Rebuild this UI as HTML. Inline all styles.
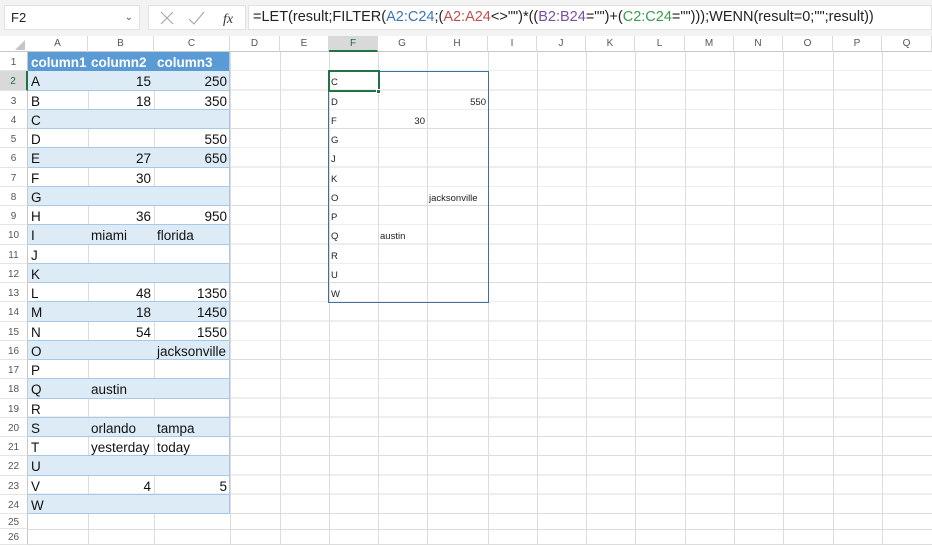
<!DOCTYPE html>
<html><head><meta charset="utf-8"><style>
*{margin:0;padding:0;box-sizing:border-box}
body{width:932px;height:545px;overflow:hidden;background:#fff;font-family:"Liberation Sans",Arial,sans-serif;position:relative}
.abs{position:absolute}
#top{left:0;top:0;width:932px;height:36px;background:#f3f3f3}
#nb{left:4px;top:5px;width:136px;height:25px;background:#fff;border:1px solid #e1e1e1;font-size:13px;line-height:23px;padding-left:6px;color:#222}
#fxbox{left:148px;top:5px;width:98px;height:25px;background:#fff;border:1px solid #e1e1e1}
#fb{left:248px;top:5px;width:684px;height:25px;background:#fff;border:1px solid #e1e1e1;font-size:14.5px;line-height:23px;padding-left:4px;color:#222;white-space:nowrap}
#hdr{left:0;top:36px;width:932px;height:16px;background:#fff;border-bottom:1px solid #c8c8c8}
.ch{position:absolute;top:36px;height:16px;font-size:10px;color:#555;text-align:center;line-height:16px;border-right:1px solid #dadada}
.rh{position:absolute;left:0;width:28px;font-size:10px;color:#555;text-align:center;border-right:1px solid #c8c8c8;border-bottom:1px solid #e4e4e4}
.vl{position:absolute;top:52px;width:1px;height:493px;background:#dcdcdc}
.hl{position:absolute;left:28px;width:904px;height:1px;background:#dcdcdc}
.band{position:absolute;left:28px;width:202px;height:19.25px;background:#ddebf7;border-bottom:1px solid #a9c8e8}
.wb{position:absolute;left:28px;width:202px;height:19.25px;border-bottom:1px solid #a9c8e8}
.t{position:absolute;height:19.25px;font-size:13.5px;line-height:21px;padding:0 3px;color:#111;white-space:nowrap}
.r{text-align:right}
.s{position:absolute;height:19.25px;font-size:9.5px;line-height:24px;padding:0 2px;color:#222;white-space:nowrap}
</style></head><body>
<div id="top" class="abs"></div>
<div id="nb" class="abs">F2<span style="position:absolute;right:6px;top:0;font-size:10px;color:#555">⌄</span></div>
<div id="fxbox" class="abs">
<svg width="98" height="25" style="position:absolute;left:0;top:0"><path d="M12 6l12 12M24 6l-12 12" stroke="#aaa" stroke-width="1.2"/><path d="M40 13l5 5 10-12" stroke="#aaa" stroke-width="1.2" fill="none"/><text x="74" y="17" font-family="Liberation Serif" font-style="italic" font-size="14" fill="#333">fx</text></svg></div>
<div id="fb" class="abs">=LET(result;FILTER(<span style="color:#3b73b9">A2:C24</span>;(<span style="color:#c0504d">A2:A24</span>&lt;&gt;"")*((<span style="color:#7a4fa0">B2:B24</span>="")+(<span style="color:#3c9a4c">C2:C24</span>="")));WENN(result=0;"";result))</div>
<div id="hdr" class="abs"></div>
<svg class="abs" style="left:14px;top:39px" width="12" height="12"><path d="M11 1V11H1z" fill="#c6c6c6"/></svg>
<div class="ch" style="left:28px;width:60px">A</div>
<div class="ch" style="left:88px;width:66px">B</div>
<div class="ch" style="left:154px;width:76px">C</div>
<div class="ch" style="left:230px;width:50px">D</div>
<div class="ch" style="left:280px;width:49px">E</div>
<div class="ch" style="left:329px;width:49px;background:#d9d9d9;color:#1e6b3e;border-bottom:2px solid #217346">F</div>
<div class="ch" style="left:378px;width:49px">G</div>
<div class="ch" style="left:427px;width:61px">H</div>
<div class="ch" style="left:488px;width:49px">I</div>
<div class="ch" style="left:537px;width:49px">J</div>
<div class="ch" style="left:586px;width:49px">K</div>
<div class="ch" style="left:635px;width:50px">L</div>
<div class="ch" style="left:685px;width:49px">M</div>
<div class="ch" style="left:734px;width:49px">N</div>
<div class="ch" style="left:783px;width:50px">O</div>
<div class="ch" style="left:833px;width:49px">P</div>
<div class="ch" style="left:882px;width:50px">Q</div>
<div style="position:absolute;left:28px;top:52px;width:904px;height:462px;background:repeating-linear-gradient(to bottom,transparent 0,transparent 18.25px,#dcdcdc 18.25px,#dcdcdc 19.25px)"></div>
<div class="hl" style="top:529px"></div><div class="hl" style="top:544px"></div>
<div class="vl" style="left:88px"></div><div class="vl" style="left:154px"></div><div class="vl" style="left:230px"></div><div class="vl" style="left:280px"></div><div class="vl" style="left:329px"></div><div class="vl" style="left:378px"></div><div class="vl" style="left:427px"></div><div class="vl" style="left:488px"></div><div class="vl" style="left:537px"></div><div class="vl" style="left:586px"></div><div class="vl" style="left:635px"></div><div class="vl" style="left:685px"></div><div class="vl" style="left:734px"></div><div class="vl" style="left:783px"></div><div class="vl" style="left:833px"></div><div class="vl" style="left:882px"></div>
<div class="band" style="top:52px;background:#5b9bd5;border-bottom:1px solid #5b9bd5"></div>
<div class="band" style="top:71.25px"></div><div class="wb" style="top:90.5px"></div>
<div class="band" style="top:109.75px"></div><div class="wb" style="top:129px"></div>
<div class="band" style="top:148.25px"></div><div class="wb" style="top:167.5px"></div>
<div class="band" style="top:186.75px"></div><div class="wb" style="top:206px"></div>
<div class="band" style="top:225.25px"></div><div class="wb" style="top:244.5px"></div>
<div class="band" style="top:263.75px"></div><div class="wb" style="top:283px"></div>
<div class="band" style="top:302.25px"></div><div class="wb" style="top:321.5px"></div>
<div class="band" style="top:340.75px"></div><div class="wb" style="top:360px"></div>
<div class="band" style="top:379.25px"></div><div class="wb" style="top:398.5px"></div>
<div class="band" style="top:417.75px"></div><div class="wb" style="top:437px"></div>
<div class="band" style="top:456.25px"></div><div class="wb" style="top:475.5px"></div>
<div class="band" style="top:494.75px"></div>
<div style="position:absolute;left:229px;top:52px;width:1px;height:462px;background:#a9c8e8"></div>
<div class="rh" style="top:52px;height:19.25px;line-height:21px">1</div>
<div class="rh" style="top:71.25px;height:19.25px;line-height:21px;background:#d9d9d9;color:#1e6b3e;border-right:2px solid #217346">2</div>
<div class="rh" style="top:90.5px;height:19.25px;line-height:21px">3</div>
<div class="rh" style="top:109.75px;height:19.25px;line-height:21px">4</div>
<div class="rh" style="top:129px;height:19.25px;line-height:21px">5</div>
<div class="rh" style="top:148.25px;height:19.25px;line-height:21px">6</div>
<div class="rh" style="top:167.5px;height:19.25px;line-height:21px">7</div>
<div class="rh" style="top:186.75px;height:19.25px;line-height:21px">8</div>
<div class="rh" style="top:206px;height:19.25px;line-height:21px">9</div>
<div class="rh" style="top:225.25px;height:19.25px;line-height:21px">10</div>
<div class="rh" style="top:244.5px;height:19.25px;line-height:21px">11</div>
<div class="rh" style="top:263.75px;height:19.25px;line-height:21px">12</div>
<div class="rh" style="top:283px;height:19.25px;line-height:21px">13</div>
<div class="rh" style="top:302.25px;height:19.25px;line-height:21px">14</div>
<div class="rh" style="top:321.5px;height:19.25px;line-height:21px">15</div>
<div class="rh" style="top:340.75px;height:19.25px;line-height:21px">16</div>
<div class="rh" style="top:360px;height:19.25px;line-height:21px">17</div>
<div class="rh" style="top:379.25px;height:19.25px;line-height:21px">18</div>
<div class="rh" style="top:398.5px;height:19.25px;line-height:21px">19</div>
<div class="rh" style="top:417.75px;height:19.25px;line-height:21px">20</div>
<div class="rh" style="top:437px;height:19.25px;line-height:21px">21</div>
<div class="rh" style="top:456.25px;height:19.25px;line-height:21px">22</div>
<div class="rh" style="top:475.5px;height:19.25px;line-height:21px">23</div>
<div class="rh" style="top:494.75px;height:19.25px;line-height:21px">24</div>
<div class="rh" style="top:514px;height:15px;line-height:17px">25</div>
<div class="rh" style="top:529px;height:16px;line-height:17px">26</div>
<div class="t" style="top:52px;left:28px;color:#fff;font-weight:bold">column1</div>
<div class="t" style="top:52px;left:88px;color:#fff;font-weight:bold">column2</div>
<div class="t" style="top:52px;left:154px;color:#fff;font-weight:bold">column3</div>
<div class="t" style="left:28px;top:71.25px">A</div>
<div class="t" style="left:28px;top:90.5px">B</div>
<div class="t" style="left:28px;top:109.75px">C</div>
<div class="t" style="left:28px;top:129px">D</div>
<div class="t" style="left:28px;top:148.25px">E</div>
<div class="t" style="left:28px;top:167.5px">F</div>
<div class="t" style="left:28px;top:186.75px">G</div>
<div class="t" style="left:28px;top:206px">H</div>
<div class="t" style="left:28px;top:225.25px">I</div>
<div class="t" style="left:28px;top:244.5px">J</div>
<div class="t" style="left:28px;top:263.75px">K</div>
<div class="t" style="left:28px;top:283px">L</div>
<div class="t" style="left:28px;top:302.25px">M</div>
<div class="t" style="left:28px;top:321.5px">N</div>
<div class="t" style="left:28px;top:340.75px">O</div>
<div class="t" style="left:28px;top:360px">P</div>
<div class="t" style="left:28px;top:379.25px">Q</div>
<div class="t" style="left:28px;top:398.5px">R</div>
<div class="t" style="left:28px;top:417.75px">S</div>
<div class="t" style="left:28px;top:437px">T</div>
<div class="t" style="left:28px;top:456.25px">U</div>
<div class="t" style="left:28px;top:475.5px">V</div>
<div class="t" style="left:28px;top:494.75px">W</div>
<div class="t r" style="left:88px;width:66px;top:71.25px">15</div>
<div class="t r" style="left:88px;width:66px;top:90.5px">18</div>
<div class="t r" style="left:88px;width:66px;top:148.25px">27</div>
<div class="t r" style="left:88px;width:66px;top:167.5px">30</div>
<div class="t r" style="left:88px;width:66px;top:206px">36</div>
<div class="t" style="left:88px;top:225.25px">miami</div>
<div class="t r" style="left:88px;width:66px;top:283px">48</div>
<div class="t r" style="left:88px;width:66px;top:302.25px">18</div>
<div class="t r" style="left:88px;width:66px;top:321.5px">54</div>
<div class="t" style="left:88px;top:379.25px">austin</div>
<div class="t" style="left:88px;top:417.75px">orlando</div>
<div class="t" style="left:88px;top:437px">yesterday</div>
<div class="t r" style="left:88px;width:66px;top:475.5px">4</div>
<div class="t r" style="left:154px;width:76px;top:71.25px">250</div>
<div class="t r" style="left:154px;width:76px;top:90.5px">350</div>
<div class="t r" style="left:154px;width:76px;top:129px">550</div>
<div class="t r" style="left:154px;width:76px;top:148.25px">650</div>
<div class="t r" style="left:154px;width:76px;top:206px">950</div>
<div class="t" style="left:154px;top:225.25px">florida</div>
<div class="t r" style="left:154px;width:76px;top:283px">1350</div>
<div class="t r" style="left:154px;width:76px;top:302.25px">1450</div>
<div class="t r" style="left:154px;width:76px;top:321.5px">1550</div>
<div class="t" style="left:154px;top:340.75px">jacksonville</div>
<div class="t" style="left:154px;top:417.75px">tampa</div>
<div class="t" style="left:154px;top:437px">today</div>
<div class="t r" style="left:154px;width:76px;top:475.5px">5</div>
<div class="s" style="left:329px;top:71.25px">C</div>
<div class="s" style="left:329px;top:90.5px">D</div>
<div class="s" style="left:329px;top:109.75px">F</div>
<div class="s" style="left:329px;top:129px">G</div>
<div class="s" style="left:329px;top:148.25px">J</div>
<div class="s" style="left:329px;top:167.5px">K</div>
<div class="s" style="left:329px;top:186.75px">O</div>
<div class="s" style="left:329px;top:206px">P</div>
<div class="s" style="left:329px;top:225.25px">Q</div>
<div class="s" style="left:329px;top:244.5px">R</div>
<div class="s" style="left:329px;top:263.75px">U</div>
<div class="s" style="left:329px;top:283px">W</div>
<div class="s r" style="left:427px;width:61px;top:90.5px">550</div>
<div class="s r" style="left:378px;width:49px;top:109.75px">30</div>
<div class="s" style="left:427px;top:186.75px">jacksonville</div>
<div class="s" style="left:378px;top:225.25px">austin</div>
<div style="position:absolute;left:328px;top:71px;width:161px;height:232px;border:1px solid #41709e"></div>
<div style="position:absolute;left:328px;top:70px;width:52px;height:22px;border:2px solid #217346"></div>
<div style="position:absolute;left:376px;top:89px;width:5px;height:5px;background:#217346;border:1px solid #fff"></div>
</body></html>
